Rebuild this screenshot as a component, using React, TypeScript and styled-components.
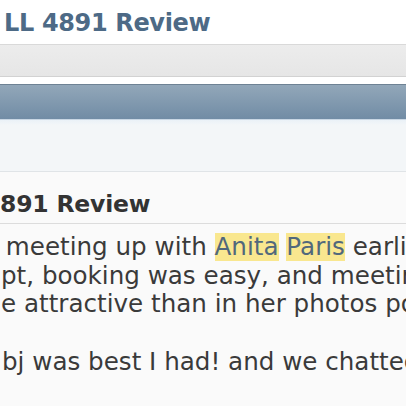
import React from "react";
import styled, { createGlobalStyle } from "styled-components";

const GlobalStyle = createGlobalStyle`
  html, body {
    margin: 0;
    padding: 0;
    background: #ffffff;
  }
  body {
    font-family: "DejaVu Sans", Verdana, sans-serif;
  }
`;

const Page = styled.div`
  width: 406px;
  height: 406px;
  overflow: hidden;
  display: flex;
  flex-flow: column nowrap;
  background: #ffffff;
`;

const ThreadTitle = styled.h1`
  margin: 0;
  height: 44px;
  padding: 3px 0 0 4px;
  box-sizing: border-box;
  font-size: 24px;
  line-height: 41px;
  letter-spacing: -0.35px;
  font-weight: 700;
  color: #4d6a86;
  white-space: nowrap;
`;

const NavStrip = styled.div`
  height: 33px;
  box-sizing: border-box;
  border-top: 1px solid #d9d9d9;
  border-bottom: 1px solid #d2d2d2;
  background: linear-gradient(#ececec, #e6e6e6);
`;

const Spacer = styled.div`
  height: 7px;
`;

const BlockHead = styled.div`
  height: 36px;
  box-sizing: border-box;
  border-top: 1px solid #6e8294;
  border-bottom: 1px solid #c9d7e4;
  background: linear-gradient(#92a7b9, #718ca5);
`;

const BlockSub = styled.div`
  height: 52px;
  box-sizing: border-box;
  border-bottom: 1px solid #e0e4e7;
  background: linear-gradient(#eaf1f7 0px, #f3f6f8 5px, #f3f6f8);
`;

const Post = styled.div`
  flex: 1;
  background: #fafafa;
  display: flex;
  flex-flow: column nowrap;
`;

const PostTitle = styled.h2`
  margin: 0;
  padding: 13px 0 0 0;
  line-height: 38px;
  font-size: 23.5px;
  letter-spacing: -0.2px;
  font-weight: 700;
  color: #333333;
  white-space: nowrap;
  border-bottom: 1px solid #dcdcdc;
`;

const PostBody = styled.div`
  padding-top: 9px;
  font-size: 24.6px;
  line-height: 28.7px;
  color: #3a3a3a;
`;

const Line = styled.div<{ $indent: number }>`
  margin-left: ${(p) => p.$indent}px;
  white-space: pre;
  overflow: hidden;
  min-height: 28.7px;
`;

const Highlight = styled.span`
  background: #f9e78f;
  color: #51687c;
`;

export default function App() {
  return (
    <>
      <GlobalStyle />
      <Page>
        <ThreadTitle>LL 4891 Review</ThreadTitle>
        <NavStrip />
        <Spacer />
        <BlockHead />
        <BlockSub />
        <Post>
          <PostTitle>891 Review</PostTitle>
          <PostBody>
            <Line $indent={-2}>
              {" meeting up with "}
              <Highlight>Anita</Highlight> <Highlight>Paris</Highlight>
              {" earlier"}
            </Line>
            <Line $indent={1}>pt, booking was easy, and meeting</Line>
            <Line $indent={1}>e attractive than in her photos posted</Line>
            <Line $indent={0} />
            <Line $indent={2}>bj was best I had! and we chatted</Line>
          </PostBody>
        </Post>
      </Page>
    </>
  );
}
